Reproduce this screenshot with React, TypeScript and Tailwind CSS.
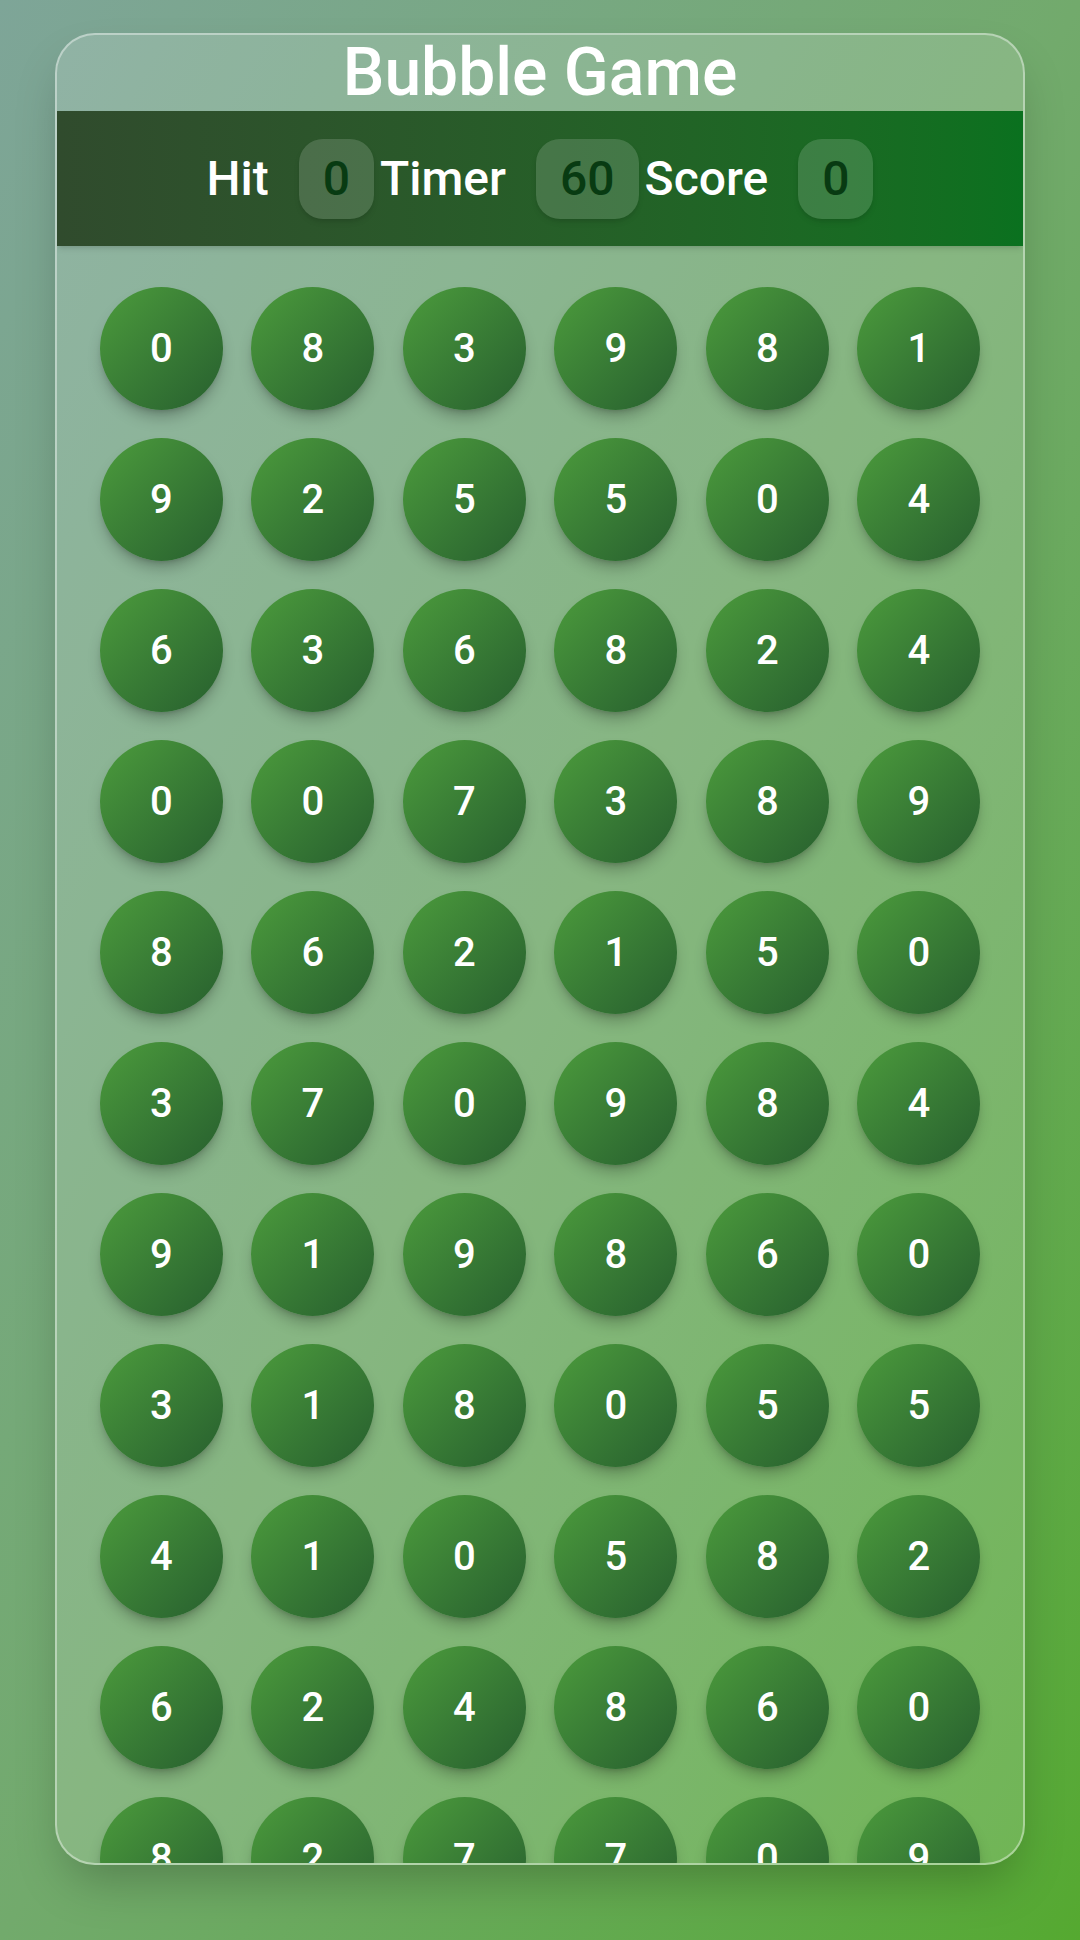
const bubbles = [
  0, 8, 3, 9, 8, 1,
  9, 2, 5, 5, 0, 4,
  6, 3, 6, 8, 2, 4,
  0, 0, 7, 3, 8, 9,
  8, 6, 2, 1, 5, 0,
  3, 7, 0, 9, 8, 4,
  9, 1, 9, 8, 6, 0,
  3, 1, 8, 0, 5, 5,
  4, 1, 0, 5, 8, 2,
  6, 2, 4, 8, 6, 0,
  8, 2, 7, 7, 0, 9,
  5, 3, 1, 6, 2, 7,
];

function Stat({ label, value }: { label: string; value: number }) {
  return (
    <div className="flex items-center gap-[30px]">
      <span className="text-5xl leading-none font-medium text-white">{label}</span>
      <span className="rounded-3xl bg-white/15 px-6 py-4 text-5xl leading-none font-medium text-[#083b12] shadow-md">
        {value}
      </span>
    </div>
  );
}

export default function App() {
  return (
    <div
      className="flex h-[1940px] w-full justify-center bg-gradient-to-br from-[#7ea598] via-[#72aa6c] to-[#55a930] pt-[33px]"
      style={{ fontFamily: "Roboto, 'Noto Sans', sans-serif" }}
    >
      <div className="flex h-[1832px] w-[970px] flex-col overflow-hidden rounded-[40px] border-2 border-white/40 bg-white/15 shadow-2xl">
        <h1 className="h-[76px] text-center text-[66px] leading-[76px] font-medium text-white">Bubble Game</h1>
        <div className="flex h-[135px] shrink-0 items-center justify-center gap-[6px] bg-gradient-to-r from-[#304b2d] to-[#0a711f] shadow-md">
          <Stat label="Hit" value={0} />
          <Stat label="Timer" value={60} />
          <Stat label="Score" value={0} />
        </div>
        <div className="grid grid-cols-[repeat(6,123px)] justify-center gap-x-[28.5px] gap-y-[28px] pt-[41px]">
          {bubbles.map((n, i) => (
            <div
              key={i}
              className="flex h-[123px] w-[123px] items-center justify-center rounded-full bg-gradient-to-br from-[#4c9c3c] to-[#275f2e] text-[40px] font-medium text-white shadow-lg shadow-black/25"
            >
              {n}
            </div>
          ))}
        </div>
      </div>
    </div>
  );
}
